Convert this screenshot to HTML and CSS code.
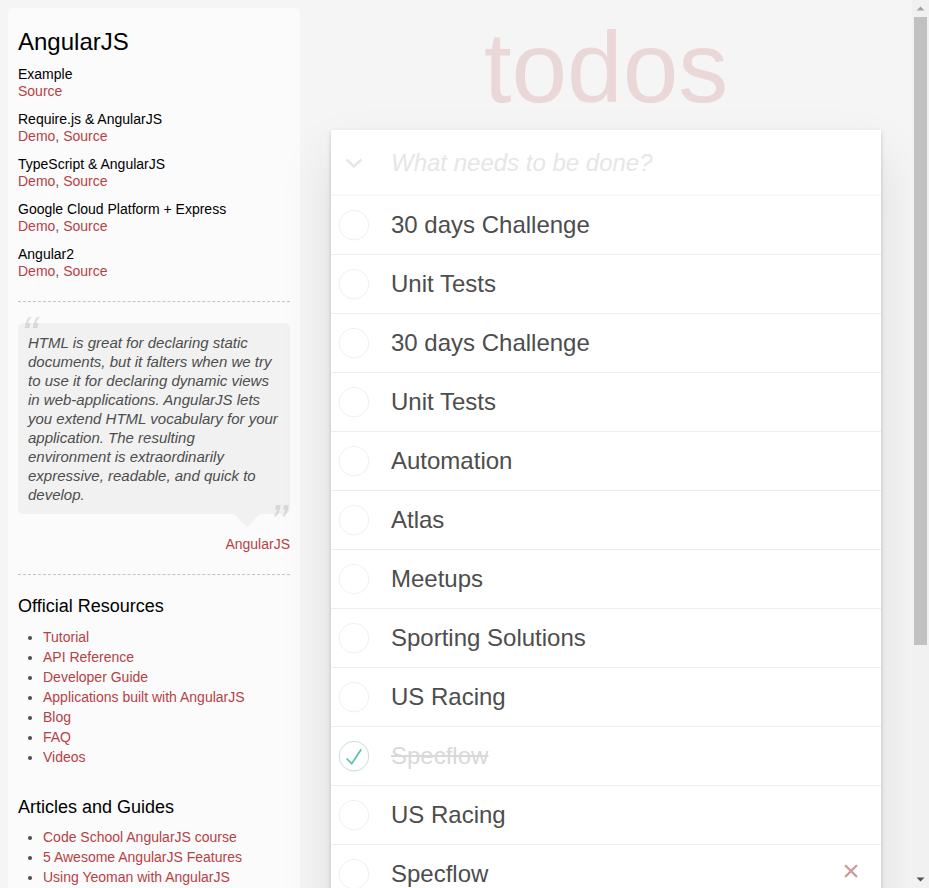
FILE: index.html
```html
<!DOCTYPE html>
<html lang="en">
<head>
<meta charset="utf-8">
<title>AngularJS • TodoMVC</title>
<link rel="stylesheet" href="styles.css">
</head>
<body>
<div class="page">
  <aside class="learn">
    <header>
      <h3>AngularJS</h3>
      <h5>Example</h5>
      <div class="links"><a href="#">Source</a></div>
      <h5>Require.js &amp; AngularJS</h5>
      <div class="links"><a href="#">Demo</a>, <a href="#">Source</a></div>
      <h5>TypeScript &amp; AngularJS</h5>
      <div class="links"><a href="#">Demo</a>, <a href="#">Source</a></div>
      <h5>Google Cloud Platform + Express</h5>
      <div class="links"><a href="#">Demo</a>, <a href="#">Source</a></div>
      <h5>Angular2</h5>
      <div class="links"><a href="#">Demo</a>, <a href="#">Source</a></div>
    </header>
    <hr>
    <div class="quote">
      <blockquote class="speech-bubble">
        <p>HTML is great for declaring static documents, but it falters when we try to use it for declaring dynamic views in web-applications. AngularJS lets you extend HTML vocabulary for your application. The resulting environment is extraordinarily expressive, readable, and quick to develop.</p>
      </blockquote>
      <div class="quote-by"><a href="#">AngularJS</a></div>
    </div>
    <hr>
    <h4>Official Resources</h4>
    <ul>
      <li><a href="#">Tutorial</a></li>
      <li><a href="#">API Reference</a></li>
      <li><a href="#">Developer Guide</a></li>
      <li><a href="#">Applications built with AngularJS</a></li>
      <li><a href="#">Blog</a></li>
      <li><a href="#">FAQ</a></li>
      <li><a href="#">Videos</a></li>
    </ul>
    <h4>Articles and Guides</h4>
    <ul>
      <li><a href="#">Code School AngularJS course</a></li>
      <li><a href="#">5 Awesome AngularJS Features</a></li>
      <li><a href="#">Using Yeoman with AngularJS</a></li>
      <li><a href="#">me&amp;ngular - an introduction to MVW</a></li>
    </ul>
    <h4>Community</h4>
    <ul>
      <li><a href="#">Walkthroughs and Tutorials on YouTube</a></li>
      <li><a href="#">Mailing list on Google Groups</a></li>
      <li><a href="#">AngularJS on Stack Overflow</a></li>
      <li><a href="#">AngularJS on Twitter</a></li>
      <li><a href="#">AngularjS on Google+</a></li>
    </ul>
    <footer class="learn-foot">
      <hr>
      <em>If you have other helpful links to share, or find any of the links above no longer work, please <a href="#">let us know</a>.</em>
    </footer>
  </aside>

  <main class="main">
    <h1 class="title">todos</h1>
    <section class="todoapp">
      <header class="new-row">
        <span class="toggle-all">
          <svg width="18" height="10" viewBox="0 0 18 10"><polyline points="1.5,1.5 9,8.5 16.5,1.5" fill="none" stroke="#e6e6e6" stroke-width="2.4"/></svg>
        </span>
        <input class="new-todo" placeholder="What needs to be done?">
      </header>
      <ul class="todo-list">
        <li class="todo"><svg class="toggle" width="40" height="40" viewBox="-10 -18 100 135"><circle cx="50" cy="50" r="50" fill="none" stroke="#ededed" stroke-width="3"/></svg><label>30 days Challenge</label></li>
        <li class="todo"><svg class="toggle" width="40" height="40" viewBox="-10 -18 100 135"><circle cx="50" cy="50" r="50" fill="none" stroke="#ededed" stroke-width="3"/></svg><label>Unit Tests</label></li>
        <li class="todo"><svg class="toggle" width="40" height="40" viewBox="-10 -18 100 135"><circle cx="50" cy="50" r="50" fill="none" stroke="#ededed" stroke-width="3"/></svg><label>30 days Challenge</label></li>
        <li class="todo"><svg class="toggle" width="40" height="40" viewBox="-10 -18 100 135"><circle cx="50" cy="50" r="50" fill="none" stroke="#ededed" stroke-width="3"/></svg><label>Unit Tests</label></li>
        <li class="todo"><svg class="toggle" width="40" height="40" viewBox="-10 -18 100 135"><circle cx="50" cy="50" r="50" fill="none" stroke="#ededed" stroke-width="3"/></svg><label>Automation</label></li>
        <li class="todo"><svg class="toggle" width="40" height="40" viewBox="-10 -18 100 135"><circle cx="50" cy="50" r="50" fill="none" stroke="#ededed" stroke-width="3"/></svg><label>Atlas</label></li>
        <li class="todo"><svg class="toggle" width="40" height="40" viewBox="-10 -18 100 135"><circle cx="50" cy="50" r="50" fill="none" stroke="#ededed" stroke-width="3"/></svg><label>Meetups</label></li>
        <li class="todo"><svg class="toggle" width="40" height="40" viewBox="-10 -18 100 135"><circle cx="50" cy="50" r="50" fill="none" stroke="#ededed" stroke-width="3"/></svg><label>Sporting Solutions</label></li>
        <li class="todo"><svg class="toggle" width="40" height="40" viewBox="-10 -18 100 135"><circle cx="50" cy="50" r="50" fill="none" stroke="#ededed" stroke-width="3"/></svg><label>US Racing</label></li>
        <li class="todo completed"><svg class="toggle" width="40" height="40" viewBox="-10 -18 100 135"><circle cx="50" cy="50" r="50" fill="none" stroke="#bddad5" stroke-width="3"/><path fill="#5dc2af" d="M72 25L42 71 27 56l-4 4 20 20 34-52z"/></svg><label>Specflow</label></li>
        <li class="todo"><svg class="toggle" width="40" height="40" viewBox="-10 -18 100 135"><circle cx="50" cy="50" r="50" fill="none" stroke="#ededed" stroke-width="3"/></svg><label>US Racing</label></li>
        <li class="todo hover"><svg class="toggle" width="40" height="40" viewBox="-10 -18 100 135"><circle cx="50" cy="50" r="50" fill="none" stroke="#ededed" stroke-width="3"/></svg><label>Specflow</label><span class="destroy">×</span></li>
      </ul>
      <footer class="todo-footer">
        <span class="count"><strong>11</strong> items left</span>
        <span class="filters"><a class="selected" href="#">All</a><a href="#">Active</a><a href="#">Completed</a></span>
        <span class="clear">Clear completed</span>
      </footer>
    </section>
    <footer class="info">
      <p>Double-click to edit a todo</p>
      <p>Credits: Christoph Burgdorf, Eric Bidelman, Jacob Mumm and Igor Minar</p>
      <p>Part of TodoMVC</p>
    </footer>
  </main>
</div>

<div class="scrollbar" aria-hidden="true">
  <svg class="sb-arrow" width="17" height="17" viewBox="0 0 17 17"><polygon points="4.5,10.5 8.5,6.5 12.5,10.5" fill="#a3a3a3"/></svg>
  <div class="sb-track"><div class="sb-thumb"></div></div>
  <svg class="sb-arrow" width="17" height="17" viewBox="0 0 17 17"><polygon points="4.5,6.5 8.5,10.5 12.5,6.5" fill="#505050"/></svg>
</div>
</body>
</html>
```
FILE: styles.css
```css
html, body {
  margin: 0;
  padding: 0;
}

body {
  font: 14px "Liberation Sans", Arial, sans-serif;
  line-height: 1.4em;
  background: #f5f5f5;
  color: #4d4d4d;
}

.page {
  display: flex;
  align-items: flex-start;
  width: 912px;
}

/* ---------- learn sidebar ---------- */
.learn {
  flex: 0 0 272px;
  width: 272px;
  margin: 8px 0 0 8px;
  padding: 10px;
  border-radius: 5px;
  background-color: rgba(255, 255, 255, 0.6);
}

.learn a {
  color: #b83f45;
  text-decoration: none;
}

.learn h3,
.learn h4,
.learn h5 {
  margin: 10px 0;
  font-weight: normal;
  line-height: 1.2;
  color: #000;
}

.learn h3 {
  font-size: 24px;
  line-height: 28px;
}

.learn h4 {
  font-size: 18px;
  margin-bottom: 9px;
}

.learn h5 {
  margin-bottom: 0;
  font-size: 14px;
  line-height: 17px;
}

.learn .links {
  line-height: 16px;
  padding-bottom: 2px;
}

.learn hr {
  margin: 20px 0;
  border: 0;
  border-top: 1px dashed #c5c5c5;
  border-bottom: 1px dashed #f7f7f7;
}

.quote {
  margin: 20px 0 0;
}

.speech-bubble {
  position: relative;
  margin: 0;
  padding: 10px;
  background: rgba(0, 0, 0, 0.04);
  border-radius: 5px;
}

.speech-bubble::after {
  content: "";
  position: absolute;
  top: 100%;
  right: 30px;
  border: 13px solid transparent;
  border-top-color: rgba(0, 0, 0, 0.04);
}

.speech-bubble p {
  margin: 0;
  font-size: 15px;
  font-style: italic;
  line-height: 19px;
}

.speech-bubble p::before,
.speech-bubble p::after {
  font-size: 50px;
  line-height: 65px;
  opacity: 0.15;
  position: absolute;
}

.speech-bubble p::before {
  content: "\201C";
  top: -20px;
  left: 3px;
}

.speech-bubble p::after {
  content: "\201D";
  bottom: -42px;
  right: 3px;
}

.quote-by {
  margin-top: 20px;
  text-align: right;
  line-height: 20px;
}

.learn ul {
  padding: 0;
  margin: 0 0 30px 25px;
}

.learn li {
  line-height: 20px;
}

.learn-foot em {
  display: block;
  line-height: 1.3;
}

/* ---------- todo app ---------- */
.main {
  flex: 0 0 550px;
  width: 550px;
  margin: 0 auto;
}

.title {
  box-sizing: border-box;
  height: 130px;
  margin: 0;
  padding-top: 10px;
  font-size: 100px;
  font-weight: 100;
  line-height: 115px;
  text-align: center;
  color: rgba(175, 47, 47, 0.15);
}

.todoapp {
  background: #fff;
  margin: 0 0 40px;
  box-shadow: 0 2px 4px 0 rgba(0, 0, 0, 0.2), 0 25px 50px 0 rgba(0, 0, 0, 0.1);
}

.new-row {
  display: flex;
  align-items: center;
  height: 66px;
  box-shadow: inset 0 -2px 1px rgba(0, 0, 0, 0.03);
}

.toggle-all {
  flex: 0 0 60px;
  display: flex;
  padding-left: 14px;
  box-sizing: border-box;
}

.new-todo {
  flex: 1;
  min-width: 0;
  box-sizing: border-box;
  height: 66px;
  padding: 16px 16px 16px 0;
  border: none;
  outline: none;
  background: transparent;
  font: 24px "Liberation Sans", Arial, sans-serif;
  color: #4d4d4d;
}

.new-todo::placeholder {
  font-style: italic;
  font-weight: 300;
  color: #e6e6e6;
}

.todo-list {
  margin: 0;
  padding: 0;
  list-style: none;
}

.todo {
  display: flex;
  align-items: center;
  font-size: 24px;
  border-bottom: 1px solid #ededed;
}

.toggle {
  flex: 0 0 40px;
}

.todo label {
  flex: 1;
  padding: 15px 15px 15px 20px;
  line-height: 28px;
  color: #4d4d4d;
}

.todo.completed label {
  color: #d9d9d9;
  text-decoration: line-through;
}

.destroy {
  flex: 0 0 40px;
  height: 40px;
  margin: 6px 10px 0 0;
  align-self: flex-start;
  font-size: 30px;
  line-height: 40px;
  text-align: center;
  color: #cc9a9a;
}

.todo-footer {
  display: flex;
  justify-content: space-between;
  align-items: center;
  height: 20px;
  padding: 10px 15px;
  color: #777;
  border-top: 1px solid #e6e6e6;
}

.filters a {
  margin: 3px;
  padding: 3px 7px;
  color: inherit;
  text-decoration: none;
  border: 1px solid transparent;
  border-radius: 3px;
}

.filters a.selected {
  border-color: rgba(175, 47, 47, 0.2);
}

.info {
  margin: 65px auto 0;
  color: #bfbfbf;
  font-size: 10px;
  text-align: center;
}

.info p {
  line-height: 1;
}

/* ---------- window scrollbar (browser chrome in the reference) ---------- */
.scrollbar {
  position: fixed;
  top: 0;
  right: 0;
  bottom: 0;
  width: 17px;
  display: flex;
  flex-direction: column;
  background: #f1f1f1;
}

.sb-arrow {
  flex: 0 0 17px;
}

.sb-track {
  flex: 1;
  padding: 0 2px;
}

.sb-thumb {
  height: 628px;
  background: #c1c1c1;
}
```
